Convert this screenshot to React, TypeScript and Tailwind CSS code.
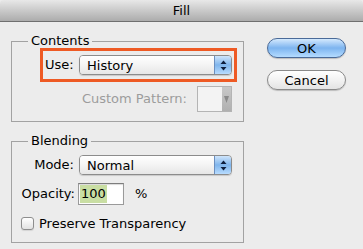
import React from "react";

const ArrowsBlue = () => (
  <svg width="7" height="11" viewBox="0 0 7 11">
    <path d="M3.5 0.5 L6.5 4 L0.5 4 Z" fill="#0f1f3d" />
    <path d="M3.5 10.5 L6.5 7 L0.5 7 Z" fill="#0f1f3d" />
  </svg>
);

const PopUp = ({ value }: { value: string }) => (
  <div className="flex h-[20px] w-[153px] overflow-hidden rounded-[4px] border border-[#8c8c8c] shadow-[0_1px_1px_rgba(0,0,0,0.15)]">
    <div className="flex flex-1 items-center bg-gradient-to-b from-white via-[#f4f4f4] to-[#e6e6e6] pl-[7px] leading-none">
      {value}
    </div>
    <div className="flex w-[17px] items-center justify-center border-l border-[#6b8fbf] bg-gradient-to-b from-[#cfe5fb] via-[#7fb5ec] to-[#b8dcff]">
      <ArrowsBlue />
    </div>
  </div>
);

const App = () => {
  return (
    <div className="h-[249px] w-[363px] overflow-hidden bg-[#ececec] font-['Lucida_Grande','DejaVu_Sans',sans-serif] text-[13px] text-black">
      {/* title bar */}
      <div className="flex h-[22px] items-center justify-center rounded-t-[4px] border-b border-[#6f6f6f] bg-gradient-to-b from-[#e8e8e8] to-[#acacac] text-[13px]">
        Fill
      </div>

      <div className="flex pl-[11px] pt-[11px]">
        {/* left column */}
        <div className="flex w-[233px] flex-col">
          <fieldset className="border border-[#a2a2a2]">
            <legend className="ml-[16px] px-[3px] leading-[16px]">Contents</legend>
            <div className="ml-[28px] mt-[-1px] flex h-[34px] w-[197px] items-center border-[3px] border-[#ee5a24] pl-[2px] pr-[2px]">
              <span>Use:</span>
              <div className="ml-auto">
                <PopUp value="History" />
              </div>
            </div>
            <div className="mt-[4px] flex items-center justify-end gap-[10px] pb-[9px] pr-[11px]">
              <span className="text-[#9c9c9c]">Custom Pattern:</span>
              <div className="flex h-[26px] w-[35px] border border-[#b4b4b4] bg-[#f3f3f3]">
                <div className="flex-1" />
                <div className="flex w-[9px] items-center justify-center bg-gradient-to-b from-[#c8c8c8] to-[#b0b0b0]">
                  <svg width="5" height="7" viewBox="0 0 5 7">
                    <path d="M0 0 L5 0 L2.5 7 Z" fill="#8a8a8a" />
                  </svg>
                </div>
              </div>
            </div>
          </fieldset>

          <fieldset className="mt-[11px] border border-[#a2a2a2]">
            <legend className="ml-[16px] px-[3px] leading-[16px]">Blending</legend>
            <div className="mt-[6px] flex items-center">
              <span className="w-[62px] text-right">Mode:</span>
              <div className="ml-[5px]">
                <PopUp value="Normal" />
              </div>
            </div>
            <div className="mt-[8px] flex items-center">
              <span className="w-[63px] text-right">Opacity:</span>
              <div className="ml-[3px] flex h-[22px] w-[46px] items-center border border-[#9a9a9a] border-t-[#7d7d7d] bg-white pl-[1px] shadow-[inset_0_1px_1px_rgba(0,0,0,0.15)]">
                <span className="flex h-[18px] items-center bg-[#c9dea3] pl-[1px] pr-[1px]">100</span>
              </div>
              <span className="ml-[11px]">%</span>
            </div>
            <div className="mt-[9px] flex items-center pb-[8px] pl-[9px]">
              <div className="h-[13px] w-[13px] rounded-[3px] border border-[#8e8e8e] bg-gradient-to-b from-white to-[#e2e2e2] shadow-[0_1px_1px_rgba(0,0,0,0.1)]" />
              <span className="ml-[5px]">Preserve Transparency</span>
            </div>
          </fieldset>
        </div>

        {/* right column buttons */}
        <div className="ml-[23px] flex flex-col pt-[5px]">
          <button className="flex h-[20px] w-[79px] items-center justify-center rounded-full border border-[#4a6a98] bg-gradient-to-b from-[#d4e9fd] via-[#7db4ef] to-[#b4dcff] leading-none shadow-[0_1px_1px_rgba(0,0,0,0.2)]">
            OK
          </button>
          <button className="mt-[12px] flex h-[20px] w-[79px] items-center justify-center rounded-full border border-[#8a8a8a] bg-gradient-to-b from-white via-[#f2f2f2] to-[#e4e4e4] leading-none shadow-[0_1px_1px_rgba(0,0,0,0.2)]">
            Cancel
          </button>
        </div>
      </div>
    </div>
  );
};

export default App;
